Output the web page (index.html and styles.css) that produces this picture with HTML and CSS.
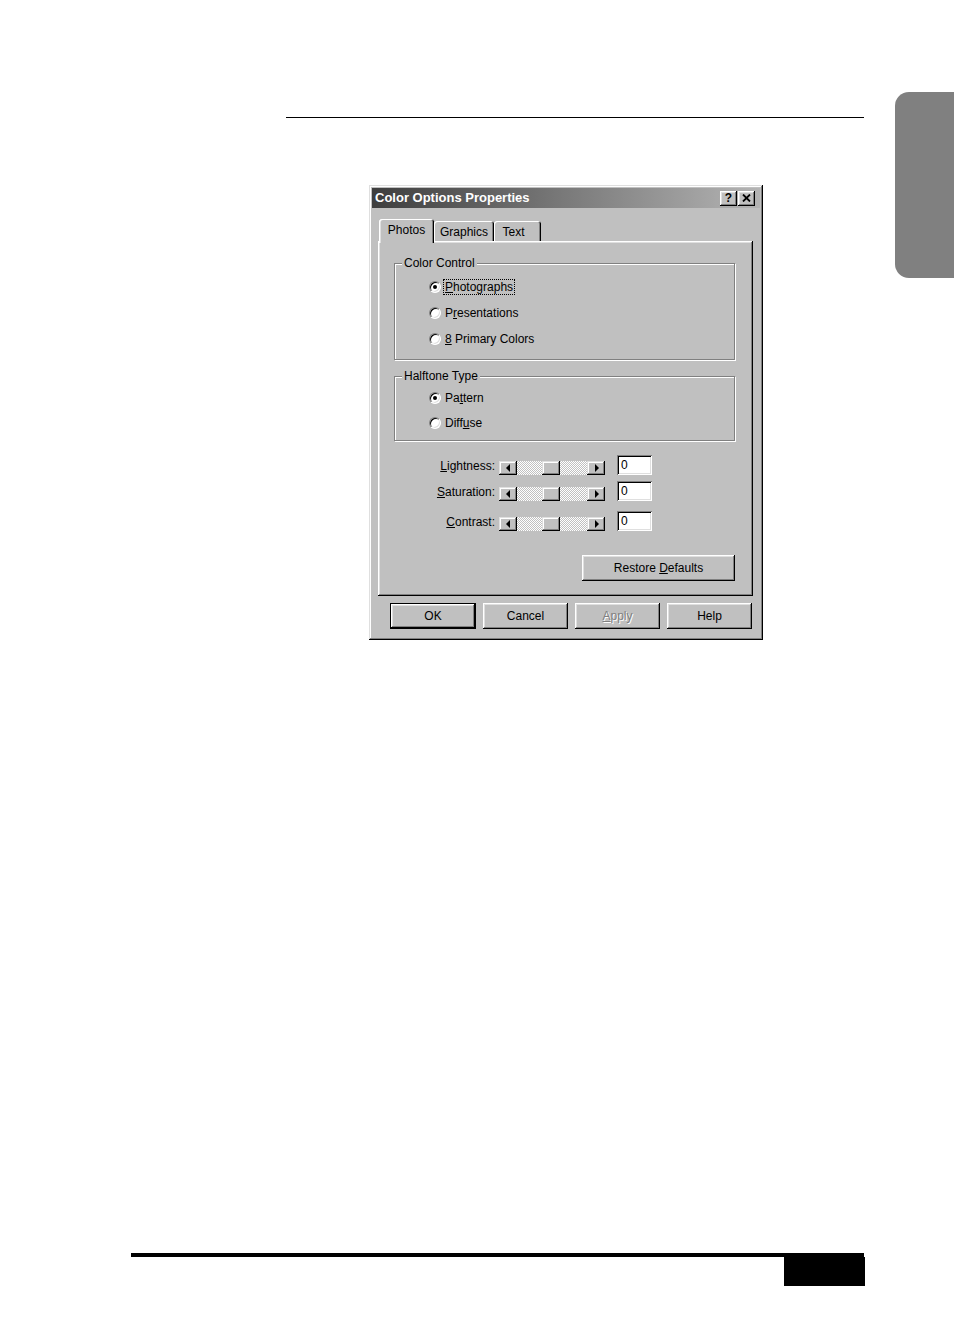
FILE: index.html
```html
<!DOCTYPE html>
<html>
<head>
<meta charset="utf-8">
<title>Color Options Properties</title>
<link rel="stylesheet" href="styles.css">
</head>
<body>
<div class="page">
  <div class="thumb-tab"></div>
  <div class="top-rule"></div>

  <div class="window">
    <div class="titlebar">
      <span class="title">Color Options Properties</span>
      <div class="title-buttons">
        <span class="tbtn tbtn-help">?</span>
        <span class="tbtn tbtn-close">
          <svg width="9" height="8" viewBox="0 0 9 8"><path d="M1 0.5 L8 7.5 M8 0.5 L1 7.5" stroke="#000" stroke-width="1.8" fill="none"/></svg>
        </span>
      </div>
    </div>

    <div class="body">
      <div class="tabs">
        <div class="tab tab-photos selected">Photos</div>
        <div class="tab tab-graphics">Graphics</div>
        <div class="tab tab-text">Text</div>
      </div>

      <div class="panel">
        <fieldset class="group group-color">
          <legend>Color Control</legend>
          <div class="options options-color">
            <div class="opt"><span class="radio checked"></span><span class="focus"><u>P</u>hotographs</span></div>
            <div class="opt"><span class="radio"></span><span>P<u>r</u>esentations</span></div>
            <div class="opt"><span class="radio"></span><span><u>8</u> Primary Colors</span></div>
          </div>
        </fieldset>

        <fieldset class="group group-halftone">
          <legend>Halftone Type</legend>
          <div class="options options-halftone">
            <div class="opt"><span class="radio checked"></span><span>Pa<u>t</u>tern</span></div>
            <div class="opt"><span class="radio"></span><span>Diff<u>u</u>se</span></div>
          </div>
        </fieldset>

        <div class="sliders">
          <div class="srow">
            <span class="slabel"><u>L</u>ightness:</span>
            <div class="slider"><span class="sbtn"><i class="arrow left"></i></span><span class="track t1"></span><span class="thumb"></span><span class="track t2"></span><span class="sbtn"><i class="arrow right"></i></span></div>
            <span class="field">0</span>
          </div>
          <div class="srow">
            <span class="slabel"><u>S</u>aturation:</span>
            <div class="slider"><span class="sbtn"><i class="arrow left"></i></span><span class="track t1"></span><span class="thumb"></span><span class="track t2"></span><span class="sbtn"><i class="arrow right"></i></span></div>
            <span class="field">0</span>
          </div>
          <div class="srow srow-last">
            <span class="slabel"><u>C</u>ontrast:</span>
            <div class="slider"><span class="sbtn"><i class="arrow left"></i></span><span class="track t1"></span><span class="thumb"></span><span class="track t2"></span><span class="sbtn"><i class="arrow right"></i></span></div>
            <span class="field">0</span>
          </div>
        </div>

        <div class="restore-row">
          <span class="btn btn-restore"><span>Restore <u>D</u>efaults</span></span>
        </div>
      </div>

      <div class="buttons">
        <span class="btn btn-default"><span>OK</span></span>
        <span class="btn"><span>Cancel</span></span>
        <span class="btn disabled"><span><u>A</u>pply</span></span>
        <span class="btn"><span>Help</span></span>
      </div>
    </div>
  </div>

  <div class="footer">
    <div class="footer-bar"></div>
    <div class="footer-box"></div>
  </div>
</div>
</body>
</html>
```

FILE: styles.css
```css
html, body {
  margin: 0;
  padding: 0;
  background: #fff;
}

body {
  font-family: "Liberation Sans", Arial, sans-serif;
  font-size: 12px;
  color: #000;
}

.page {
  position: relative;
  width: 954px;
  height: 1343px;
  overflow: hidden;
}

.thumb-tab {
  position: absolute;
  top: 92px;
  right: 0;
  width: 59px;
  height: 186px;
  background: #808080;
  border-radius: 14px 0 0 14px;
}

.top-rule {
  margin: 0 0 0 286px;
  padding-top: 117px;
  width: 578px;
  border-bottom: 1px solid #000;
}

/* ---------- window ---------- */
.window {
  box-sizing: border-box;
  margin: 67px 0 0 369px;
  width: 394px;
  height: 455px;
  padding: 3px;
  background: #c0c0c0;
  box-shadow: inset -1px -1px #000, inset 1px 1px #dfdfdf, inset -2px -2px #808080, inset 2px 2px #fff;
}

.titlebar {
  height: 20px;
  display: flex;
  align-items: center;
  justify-content: space-between;
  padding: 0 5px 0 3px;
  background: linear-gradient(90deg, #3e3e3e 0%, #7a7a7a 50%, #b4b4b4 100%);
}

.title {
  color: #fff;
  font-weight: bold;
  font-size: 13px;
  line-height: 16px;
}

.title-buttons {
  display: flex;
  gap: 1px;
}

.tbtn {
  box-sizing: border-box;
  width: 17px;
  height: 15px;
  display: flex;
  align-items: center;
  justify-content: center;
  background: #c0c0c0;
  box-shadow: inset -1px -1px #000, inset 1px 1px #fff, inset -2px -2px #808080, inset 2px 2px #dfdfdf;
  font-weight: bold;
  font-size: 12px;
  line-height: 12px;
}

.tbtn-help {
  padding-bottom: 1px;
}

.body {
  padding: 11px 7px 0 6px;
}

/* ---------- tabs ---------- */
.tabs {
  display: flex;
  align-items: flex-end;
  height: 22px;
  padding-left: 1px;
}

.tab {
  box-sizing: border-box;
  height: 20px;
  padding-top: 4px;
  text-align: center;
  line-height: 14px;
  background: #c0c0c0;
  border-radius: 3px 3px 0 0;
  box-shadow: inset 1px 1px #fff, inset -1px 0 #000, inset -2px 0 #808080;
}

.tab.selected {
  height: 24px;
  margin-bottom: -2px;
  position: relative;
  z-index: 1;
  box-shadow: inset 1px 1px #fff, inset 2px 0 #dfdfdf, inset -1px 0 #000, inset -2px 0 #808080;
}

.tab-photos { width: 55px; }
.tab-graphics { width: 60px; }
.tab-text { width: 47px; padding-right: 8px; }

.panel {
  box-sizing: border-box;
  height: 355px;
  padding: 2px;
  background: #c0c0c0;
  box-shadow: inset -1px -1px #000, inset 1px 1px #fff, inset -2px -2px #808080, inset 2px 2px #dfdfdf;
  display: flex;
  flex-direction: column;
}

/* ---------- group boxes ---------- */
.group {
  margin: 13px 16px 0 14px;
  padding: 0;
  border: 1px solid #808080;
  box-shadow: inset 1px 1px #fff, 1px 1px #fff;
  min-width: 0;
}

.group-halftone {
  margin-top: 9px;
}

.group legend {
  margin-left: 7px;
  padding: 0 2px;
  line-height: 14px;
  background: #c0c0c0;
}

.options {
  padding-left: 34px;
}

.options-color {
  padding-top: 4px;
  padding-bottom: 7px;
}

.options-halftone {
  padding-top: 2px;
  padding-bottom: 5px;
}

.opt {
  display: flex;
  align-items: center;
  gap: 4px;
  line-height: 14px;
}

.options-color .opt { height: 26px; }
.options-halftone .opt { height: 25px; }

.radio {
  box-sizing: border-box;
  width: 12px;
  height: 12px;
  border-radius: 50%;
  background: #fff;
  border: 1px solid;
  border-color: #808080 #fff #fff #808080;
  box-shadow: inset 1px 1px #000, inset -1px -1px #dfdfdf;
  display: flex;
  align-items: center;
  justify-content: center;
  flex: none;
}

.radio.checked::after {
  content: "";
  width: 4px;
  height: 4px;
  border-radius: 50%;
  background: #000;
}

.focus {
  outline: 1px dotted #000;
  outline-offset: 0;
  padding: 0 1px;
  margin-left: -1px;
}

u {
  text-decoration: underline;
  text-underline-offset: 1px;
}

/* ---------- sliders ---------- */
.sliders {
  margin-top: 14px;
  margin-left: 38px;
  display: flex;
  flex-direction: column;
  gap: 6px;
}

.srow {
  display: flex;
  align-items: flex-end;
  height: 20px;
}

.srow-last {
  margin-top: 4px;
}

.slabel {
  width: 77px;
  text-align: right;
  margin-right: 4px;
  line-height: 14px;
  margin-bottom: 2px;
}

.slider {
  display: flex;
  width: 106px;
  height: 14px;
  margin-right: 12px;
}

.sbtn, .thumb {
  box-sizing: border-box;
  width: 18px;
  height: 14px;
  background: #c0c0c0;
  box-shadow: inset -1px -1px #000, inset 1px 1px #dfdfdf, inset -2px -2px #808080, inset 2px 2px #fff;
  display: flex;
  align-items: center;
  justify-content: center;
  flex: none;
}

.track {
  height: 14px;
  background-image: conic-gradient(#fff 25%, #c0c0c0 0 50%, #fff 0 75%, #c0c0c0 0);
  background-size: 2px 2px;
}

.t1 { width: 25px; }
.t2 { width: 27px; }

.arrow {
  width: 0;
  height: 0;
  border-top: 4px solid transparent;
  border-bottom: 4px solid transparent;
}

.arrow.left {
  border-right: 4px solid #000;
  margin-left: -1px;
}

.arrow.right {
  border-left: 4px solid #000;
  margin-left: 1px;
}

.field {
  box-sizing: border-box;
  width: 35px;
  height: 20px;
  padding: 3px 0 0 4px;
  line-height: 14px;
  background: #fff;
  box-shadow: inset 1px 1px #808080, inset -1px -1px #fff, inset 2px 2px #000, inset -2px -2px #dfdfdf;
}

/* ---------- buttons ---------- */
.restore-row {
  display: flex;
  justify-content: flex-end;
  margin: 24px 16px 0 0;
}

.btn {
  box-sizing: border-box;
  width: 85px;
  height: 26px;
  display: flex;
  align-items: center;
  justify-content: center;
  line-height: 14px;
  background: #c0c0c0;
  box-shadow: inset -1px -1px #000, inset 1px 1px #fff, inset -2px -2px #808080, inset 2px 2px #dfdfdf;
}

.btn-restore {
  width: 153px;
}

.btn-default {
  width: 86px;
  border: 1px solid #000;
  box-shadow: inset -1px -1px #000, inset 1px 1px #fff, inset -2px -2px #808080, inset 2px 2px #dfdfdf;
}

.btn.disabled {
  color: #808080;
  text-shadow: 1px 1px #fff;
}

.buttons {
  display: flex;
  gap: 7px;
  margin: 7px 0 0 12px;
}

/* ---------- footer ---------- */
.footer {
  margin: 613px 0 0 131px;
  width: 733px;
}

.footer-bar {
  height: 4px;
  background: #000;
}

.footer-box {
  margin-left: 653px;
  width: 81px;
  height: 29px;
  background: #000;
}
```
